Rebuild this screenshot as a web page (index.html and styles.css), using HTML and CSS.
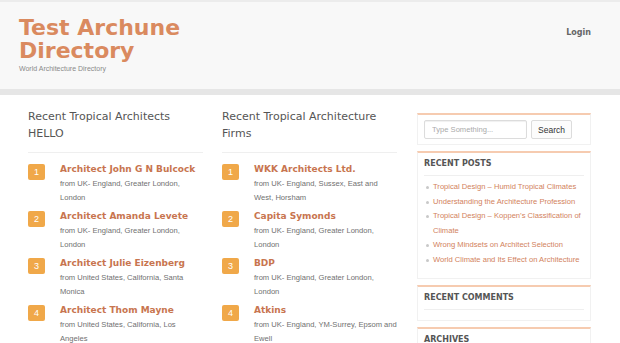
FILE: index.html
```html
<!DOCTYPE html>
<html lang="en">
<head>
    <meta charset="UTF-8">
    <meta name="viewport" content="width=device-width, initial-scale=1.0">
    <title>Test Archune Directory</title>
    <link rel="stylesheet" href="styles.css">
</head>
<body>
<header class="site-header">
    <div class="branding">
        <div class="site-title">Test Archune<br>Directory</div>
        <div class="site-tagline">World Architecture Directory</div>
    </div>
    <nav class="site-nav">
        <a href="#" class="nav-link">Login</a>
    </nav>
</header>

<div class="main">
    <section class="column">
        <h2 class="column-title">Recent Tropical Architects HELLO</h2>
        <ol class="entry-list">
            <li class="entry">
                <span class="badge">1</span>
                <div class="entry-body">
                    <a href="#" class="entry-title">Architect John G N Bulcock</a>
                    <p class="entry-desc">from UK- England, Greater London, London</p>
                </div>
            </li>
            <li class="entry">
                <span class="badge">2</span>
                <div class="entry-body">
                    <a href="#" class="entry-title">Architect Amanda Levete</a>
                    <p class="entry-desc">from UK- England, Greater London, London</p>
                </div>
            </li>
            <li class="entry">
                <span class="badge">3</span>
                <div class="entry-body">
                    <a href="#" class="entry-title">Architect Julie Eizenberg</a>
                    <p class="entry-desc">from United States, California, Santa Monica</p>
                </div>
            </li>
            <li class="entry">
                <span class="badge">4</span>
                <div class="entry-body">
                    <a href="#" class="entry-title">Architect Thom Mayne</a>
                    <p class="entry-desc">from United States, California, Los Angeles</p>
                </div>
            </li>
        </ol>
    </section>

    <section class="column">
        <h2 class="column-title">Recent Tropical Architecture Firms</h2>
        <ol class="entry-list">
            <li class="entry">
                <span class="badge">1</span>
                <div class="entry-body">
                    <a href="#" class="entry-title">WKK Architects Ltd.</a>
                    <p class="entry-desc">from UK- England, Sussex, East and West, Horsham</p>
                </div>
            </li>
            <li class="entry">
                <span class="badge">2</span>
                <div class="entry-body">
                    <a href="#" class="entry-title">Capita Symonds</a>
                    <p class="entry-desc">from UK- England, Greater London, London</p>
                </div>
            </li>
            <li class="entry">
                <span class="badge">3</span>
                <div class="entry-body">
                    <a href="#" class="entry-title">BDP</a>
                    <p class="entry-desc">from UK- England, Greater London, London</p>
                </div>
            </li>
            <li class="entry">
                <span class="badge">4</span>
                <div class="entry-body">
                    <a href="#" class="entry-title">Atkins</a>
                    <p class="entry-desc">from UK- England, YM-Surrey, Epsom and Ewell</p>
                </div>
            </li>
        </ol>
    </section>

    <aside class="sidebar">
        <div class="widget widget-search">
            <input type="text" class="search-input" placeholder="Type Something...">
            <button class="search-button">Search</button>
        </div>
        <div class="widget">
            <h3 class="widget-title">Recent Posts</h3>
            <ul class="post-list">
                <li><a href="#">Tropical Design – Humid Tropical Climates</a></li>
                <li><a href="#">Understanding the Architecture Profession</a></li>
                <li><a href="#">Tropical Design – Koppen’s Classification of Climate</a></li>
                <li><a href="#">Wrong Mindsets on Architect Selection</a></li>
                <li><a href="#">World Climate and Its Effect on Architecture</a></li>
            </ul>
        </div>
        <div class="widget">
            <h3 class="widget-title">Recent Comments</h3>
        </div>
        <div class="widget">
            <h3 class="widget-title">Archives</h3>
        </div>
    </aside>
</div>
</body>
</html>
```

FILE: styles.css
```css
body {
    margin: 0;
    background-color: #ffffff;
    font-family: "Liberation Sans", Arial, sans-serif;
    color: #777;
}

a {
    text-decoration: none;
}

.site-header {
    display: flex;
    justify-content: space-between;
    background-color: #f8f8f8;
    border-top: 2px solid #ececec;
    border-bottom: 6px solid #e6e6e6;
    height: 87px;
}

.branding {
    padding: 14px 0 0 19px;
}

.site-title {
    font-family: "DejaVu Sans", sans-serif;
    font-weight: bold;
    font-size: 22px;
    line-height: 23px;
    color: #da8a5f;
}

.site-tagline {
    margin-top: 2px;
    font-size: 7px;
    line-height: 10px;
    color: #8a8a8a;
}

.site-nav {
    padding: 19px 29px 0 0;
}

.nav-link {
    font-family: "DejaVu Sans", sans-serif;
    font-weight: bold;
    font-size: 8px;
    line-height: 12px;
    color: #666;
}

.main {
    display: grid;
    grid-template-columns: 175px 175px 175px;
    column-gap: 19px;
    padding: 13px 0 0 28px;
}

.column-title {
    margin: 0;
    padding-bottom: 10px;
    border-bottom: 1px solid #efefef;
    font-family: "DejaVu Sans", sans-serif;
    font-weight: normal;
    font-size: 11px;
    line-height: 17px;
    color: #555;
}

.entry-list {
    list-style: none;
    margin: 8px 0 0;
    padding: 0;
}

.entry {
    display: flex;
    margin-bottom: 3px;
}

.badge {
    flex: none;
    width: 17px;
    height: 16px;
    margin: 3px 15px 0 0;
    border-radius: 2px;
    background-color: #f0a849;
    color: #fff;
    font-size: 9px;
    line-height: 16px;
    text-align: center;
}

.entry-body {
    flex: 1;
}

.entry-title {
    display: block;
    font-family: "DejaVu Sans", sans-serif;
    font-weight: bold;
    font-size: 9px;
    line-height: 16px;
    color: #c8754f;
}

.entry-desc {
    margin: 0;
    font-size: 7.6px;
    line-height: 14px;
    color: #707070;
}

.sidebar {
    margin-top: 5px;
    margin-left: 1px;
}

.widget {
    margin-bottom: 6px;
    padding: 6px 4px 10px 6px;
    border: 1px solid #f1f1f1;
    border-top: 2px solid #f6cbb0;
}

.widget-search {
    display: flex;
    padding: 5px 6px;
}

.search-input {
    box-sizing: border-box;
    width: 103px;
    height: 19px;
    padding: 0 7px;
    border: 1px solid #dcdcdc;
    border-radius: 2px;
    box-shadow: inset 0 1px 1px #f0f0f0;
    font-family: "Liberation Sans", Arial, sans-serif;
    font-size: 7.6px;
    color: #555;
}

.search-input::placeholder {
    color: #aaa;
}

.search-button {
    box-sizing: border-box;
    width: 41px;
    height: 19px;
    margin-left: 4px;
    padding: 0;
    border: 1px solid #dcdcdc;
    border-radius: 2px;
    background-color: #fcfcfc;
    font-family: "Liberation Sans", Arial, sans-serif;
    font-size: 8.5px;
    color: #333;
}

.widget-title {
    margin: 0 2px 0 0;
    padding-bottom: 6px;
    border-bottom: 1px solid #efefef;
    font-family: "DejaVu Sans", sans-serif;
    font-weight: bold;
    font-size: 8px;
    line-height: 10px;
    text-transform: uppercase;
    color: #555;
}

.post-list {
    margin: 4px 0 0;
    padding: 0 0 0 9px;
    list-style: none;
}

.post-list li {
    position: relative;
    font-size: 7.6px;
    line-height: 14.6px;
}

.post-list li::before {
    content: "";
    position: absolute;
    left: -7px;
    top: 6px;
    width: 3px;
    height: 3px;
    border-radius: 50%;
    background-color: #c8c8c8;
}

.post-list a {
    color: #d2825c;
}
```
